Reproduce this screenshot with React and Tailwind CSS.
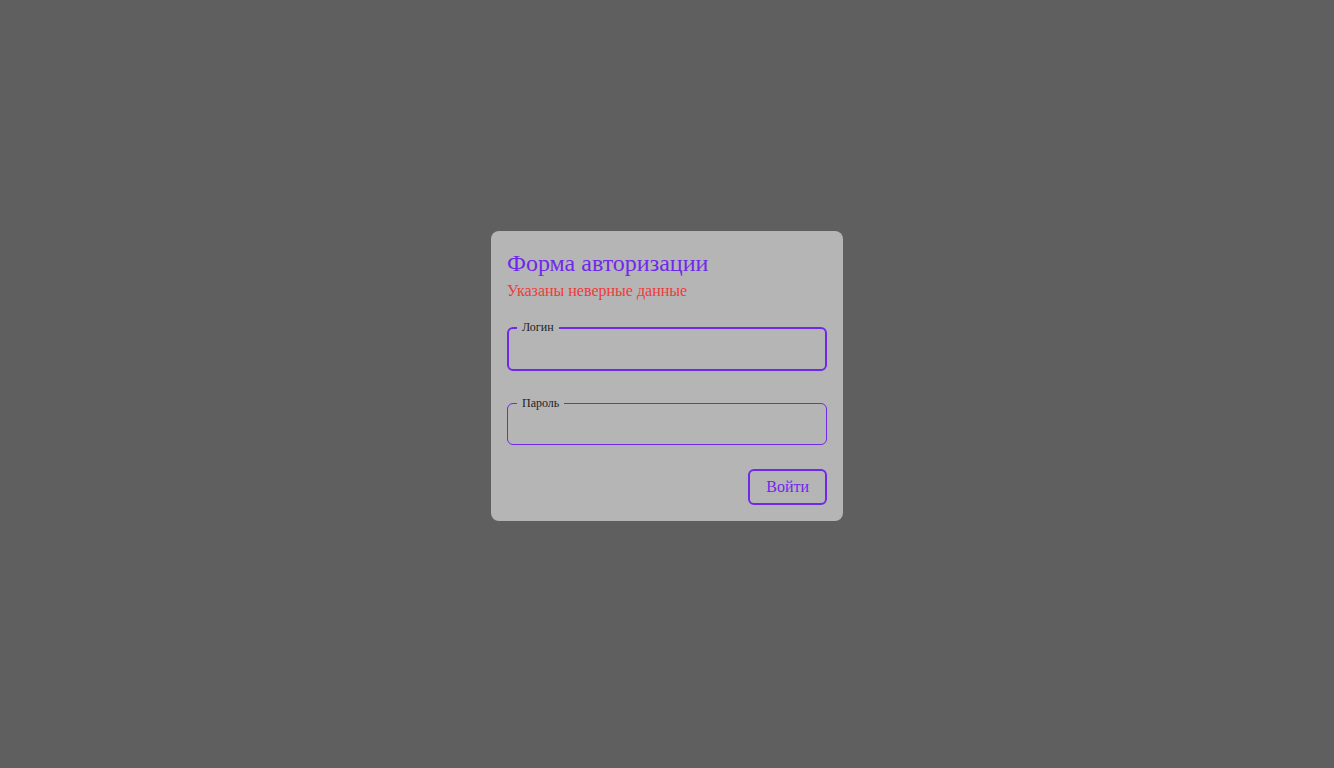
export default function App() {
  return (
    <div
      className="min-h-screen w-full bg-[#5f5f5f] flex items-center justify-center pb-4"
      style={{ fontFamily: '"Liberation Serif", "Times New Roman", serif' }}
    >
      <div className="w-[352px] rounded-[8px] bg-[#b5b5b5] px-4 pt-[17px] pb-4 flex flex-col">
        <div className="text-[24px] leading-[30px] text-[#7028ec]">Форма авторизации</div>
        <div className="mt-[3px] text-[16px] leading-[20px] text-[#f23a3a]">Указаны неверные данные</div>

        <fieldset className="mt-[19px] border-2 border-[#7028ec] rounded-[6px] pl-[8px] pr-2 m-0 p-0">
          <legend className="px-[5px] text-[12px] leading-[15px] text-[#222]">Логин</legend>
          <div className="h-[34px]"></div>
        </fieldset>

        <fieldset className="mt-[25px] border border-[#7028ec] rounded-[6px] pl-[9px] pr-2 m-0 p-0">
          <legend className="px-[5px] text-[12px] leading-[15px] text-[#222]">Пароль</legend>
          <div className="h-[33px]"></div>
        </fieldset>

        <div className="mt-6 flex justify-end">
          <button className="border-2 border-[#7028ec] rounded-[6px] px-4 py-[6px] text-[16px] leading-[20px] text-[#7028ec] bg-transparent">
            Войти
          </button>
        </div>
      </div>
    </div>
  );
}
